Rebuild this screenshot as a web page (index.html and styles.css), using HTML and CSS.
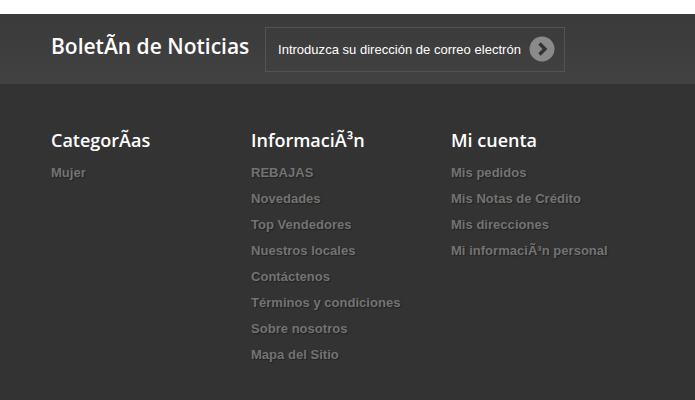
FILE: index.html

```html
<!DOCTYPE html>
<html lang="es">
<head>
  <meta charset="UTF-8">
  <title>Boletín de Noticias</title>
  <link rel="stylesheet" href="styles.css">
</head>
<body>

<div class="newsletter">
  <h2 class="news-title">BoletÃn de Noticias</h2>
  <form class="news-form">
    <span class="news-input">Introduzca su dirección de correo electrón</span>
    <span class="news-go">
      <svg width="26" height="26" viewBox="0 0 26 26">
        <circle cx="13" cy="13" r="12.5" fill="#8a8a8a"/>
        <path d="M10.5 7.5 L16 13 L10.5 18.5" fill="none" stroke="#333" stroke-width="3.4"/>
      </svg>
    </span>
  </form>
</div>

<div class="footer">
  <div class="col">
    <h3>CategorÃas</h3>
    <ul>
      <li>Mujer</li>
    </ul>
  </div>
  <div class="col">
    <h3>InformaciÃ³n</h3>
    <ul>
      <li>REBAJAS</li>
      <li>Novedades</li>
      <li>Top Vendedores</li>
      <li>Nuestros locales</li>
      <li>Contáctenos</li>
      <li>Términos y condiciones</li>
      <li>Sobre nosotros</li>
      <li>Mapa del Sitio</li>
    </ul>
  </div>
  <div class="col">
    <h3>Mi cuenta</h3>
    <ul>
      <li>Mis pedidos</li>
      <li>Mis Notas de Crédito</li>
      <li>Mis direcciones</li>
      <li>Mi informaciÃ³n personal</li>
    </ul>
  </div>
</div>

</body>
</html>
```

FILE: styles.css

```css
html, body { margin: 0; padding: 0; background: #fff; }
body { padding-top: 14px; height: 386px; overflow: hidden; font-family: "Liberation Sans", Arial, sans-serif; }

.newsletter {
  display: flex; align-items: center;
  height: 70px; padding-left: 51px; box-sizing: border-box;
  background: linear-gradient(#3a3a3a, #424242);
}
.news-title {
  margin: 0; width: 214px; padding-bottom: 6px;
  font-family: "Open Sans", sans-serif; font-size: 21px; font-weight: 600; line-height: 28px; color: #fff;
}
.news-form {
  display: flex; align-items: center; justify-content: space-between;
  width: 300px; height: 45px; box-sizing: border-box; padding: 0 9px 0 12px;
  border: 1px solid #535353;
}
.news-input { font-size: 13px; letter-spacing: 0.02px; color: #fff; white-space: nowrap; }
.news-go { display: flex; }

.footer {
  display: flex; height: 316px; box-sizing: border-box;
  padding: 43px 0 0 51px; background: #333;
}
.col { width: 200px; }
.col h3 {
  margin: 0 0 7px;
  font-family: "Open Sans", sans-serif; font-size: 18px; font-weight: 600; line-height: 26px; color: #fff;
}
.col ul { margin: 0; padding: 0; list-style: none; }
.col li {
  height: 26px; line-height: 26px;
  font-size: 13px; font-weight: 700; color: #737373; white-space: nowrap;
  letter-spacing: 0.03px;
  text-shadow: 1px 1px 1px #222;
}
```
